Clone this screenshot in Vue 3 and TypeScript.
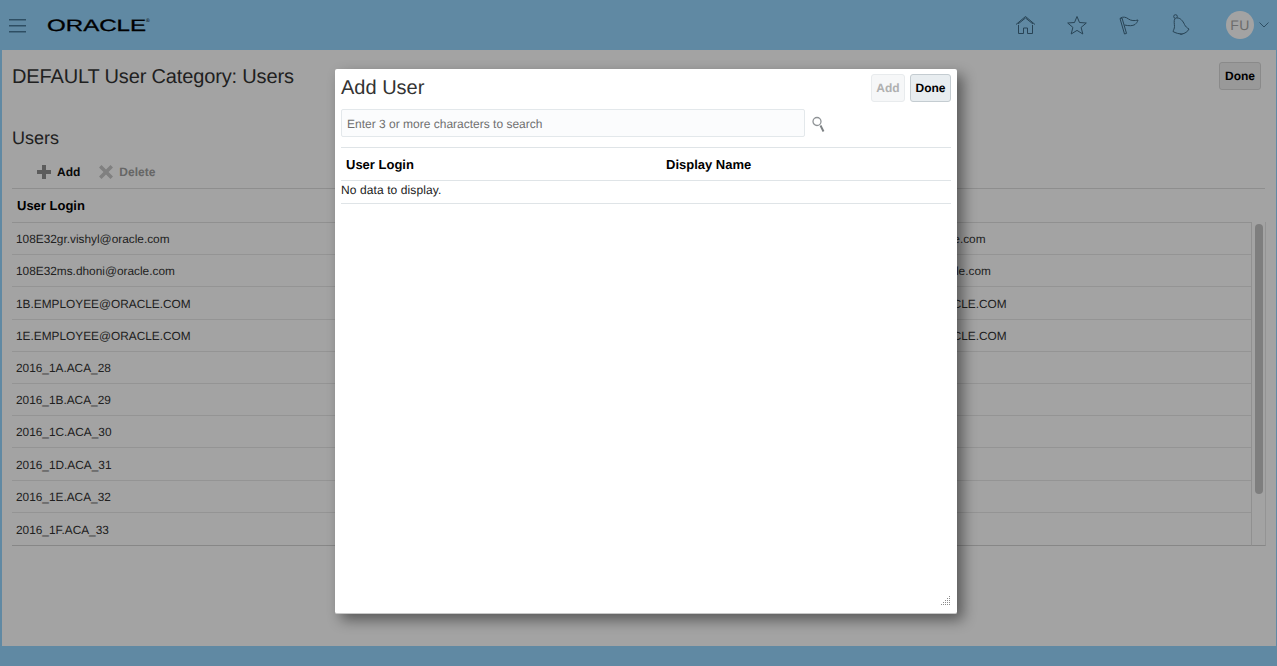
<script setup lang="ts">
interface UserRow {
  login: string
  display: string
}

const logins = [
  '108E32gr.vishyl@oracle.com',
  '108E32ms.dhoni@oracle.com',
  '1B.EMPLOYEE@ORACLE.COM',
  '1E.EMPLOYEE@ORACLE.COM',
  '2016_1A.ACA_28',
  '2016_1B.ACA_29',
  '2016_1C.ACA_30',
  '2016_1D.ACA_31',
  '2016_1E.ACA_32',
  '2016_1F.ACA_33',
]

const rows: UserRow[] = logins.map((login) => ({ login, display: login }))

// resize grip, a stepped triangle of dots
const grip: { x: number; y: number }[] = []
for (let r = 0; r < 5; r++) {
  for (let c = 4 - r; c < 5; c++) {
    grip.push({ x: c * 2, y: r * 2 })
  }
}
</script>

<template>
  <div class="page">
    <header class="topbar">
      <div class="burger"><i></i><i></i><i></i></div>
      <div class="logo"><span class="logo-text">ORACLE</span><span class="logo-reg">®</span></div>
      <nav class="nav">
        <svg class="nav-icon" width="22" height="20" viewBox="0 0 22 20">
          <path d="M1 9.500 10.500 1.500 20 9.500M3 9 10.500 3 18 9" />
          <path d="M3.500 10v8.500h5V13h4v5.500h5V10" />
        </svg>
        <svg class="nav-icon star" width="22" height="20" viewBox="0 0 22 20">
          <path d="M11 1.500l2.500 6 6.800.5-5.200 4.400 1.700 6.600-5.800-3.600-5.800 3.600 1.700-6.600L1.700 8l6.800-.5z" />
        </svg>
        <svg class="nav-icon" width="22" height="20" viewBox="0 0 22 20">
          <path d="M1 3.500 5.500 19l2-.6L3 3z" />
          <path d="M1.500 3C4 1.500 7 2 9.500 4c2.500 1.800 6 2 9.500 1-.5 2-1.500 3-3 4.500-2.500 1.500-6 1.500-10.500.500" />
        </svg>
        <svg class="nav-icon" width="22" height="22" viewBox="0 0 22 22">
          <circle cx="4.500" cy="2.500" r="1.800" />
          <path d="M4 4.500C2.500 7 3.500 10 3.500 12.500c0 2-1 3.500-1.500 5 2.500 1.500 6 2.500 9 2.500 2.500-.3 6-2.500 7-5-2-1-3.500-2.500-4.500-4.500C12 7 9 3.500 6 4" />
          <path d="M8.500 19.500c.8 1 2 1.100 3 .4" />
        </svg>
        <div class="avatar">FU</div>
        <svg class="chevron" width="10" height="6" viewBox="0 0 10 6">
          <path d="M.5.500 5 5 9.500.500" />
        </svg>
      </nav>
    </header>

    <main class="content">
      <div class="title-row">
        <h1>DEFAULT User Category: Users</h1>
        <button class="btn page-done">Done</button>
      </div>
      <h2>Users</h2>
      <div class="toolbar">
        <span class="tool">
          <svg width="14" height="14" viewBox="0 0 14 14"><path class="tool-plus" d="M5 0h4v5h5v4H9v5H5V9H0V5h5z" /></svg>
          <b>Add</b>
        </span>
        <span class="tool tool-off">
          <svg width="14" height="14" viewBox="0 0 14 14"><path class="tool-x" d="M2.500 0 7 4.500 11.500 0 14 2.500 9.500 7l4.500 4.500-2.500 2.500L7 9.500 2.500 14 0 11.500 4.500 7 0 2.500z" /></svg>
          <b>Delete</b>
        </span>
      </div>
      <div class="thead">
        <span>User Login</span>
        <span>Display Name</span>
      </div>
      <div class="scroller">
        <div class="tbody">
          <div v-for="row in rows" :key="row.login" class="trow">
            <span>{{ row.login }}</span>
            <span>{{ row.display }}</span>
          </div>
        </div>
        <div class="track"><div class="thumb"></div></div>
      </div>
    </main>

    <footer class="footer"></footer>

    <div class="mask"></div>

    <section class="dialog">
      <div class="dialog-head">
        <h3>Add User</h3>
        <div class="dialog-actions">
          <button class="btn btn-off">Add</button>
          <button class="btn btn-done">Done</button>
        </div>
      </div>
      <div class="search">
        <input class="search-input" type="text" placeholder="Enter 3 or more characters to search" />
        <svg width="14" height="20" viewBox="0 0 14 20">
          <circle cx="5" cy="8.500" r="4" fill="none" stroke="#8f9396" stroke-width="1.300" />
          <path d="M8.500 12.500 11.500 18.500" stroke="#7d8184" stroke-width="2" />
        </svg>
      </div>
      <div class="dialog-thead">
        <span>User Login</span>
        <span>Display Name</span>
      </div>
      <div class="empty">No data to display.</div>
      <svg class="grip" width="10" height="10" viewBox="0 0 10 10">
        <rect v-for="(d, i) in grip" :key="i" :x="d.x" :y="d.y" width="1" height="1" />
      </svg>
    </section>
  </div>
</template>

<style scoped>
.page {
  position: relative;
  display: flex;
  flex-direction: column;
  height: 666px;
  overflow: hidden;
  background: #96d6ff;
  font-family: "Liberation Sans", Arial, sans-serif;
  font-size: 12px;
  color: #333;
  text-rendering: geometricPrecision;
}

.topbar {
  display: flex;
  align-items: center;
  flex: 0 0 50px;
  padding-left: 9px;
}

.burger {
  display: flex;
  flex-direction: column;
  gap: 5px;
  width: 17px;
  margin-top: 1px;
}

.burger i {
  height: 1px;
  background: #487b9b;
  box-shadow: 0 1px 0 #487b9b80;
}

.logo {
  display: flex;
  align-items: flex-start;
  margin: 2px 0 0 21px;
  color: #000;
}

.logo-text {
  display: block;
  width: 70px;
  font-size: 16.5px;
  line-height: 17px;
  transform: scaleX(1.46);
  transform-origin: left center;
  -webkit-text-stroke: 0.3px #000;
}

.logo-reg {
  margin-left: 29px;
  font-size: 5px;
  line-height: 6px;
}

.nav {
  display: flex;
  align-items: center;
  margin-left: auto;
  padding-right: 8px;
}

.nav-icon {
  margin-right: 30px;
  fill: none;
  stroke: #3f6a85;
  stroke-width: 1;
}

.star {
  margin: 0 31px 0 -1px;
}

.avatar {
  display: flex;
  align-items: center;
  justify-content: center;
  width: 28px;
  height: 28px;
  margin-left: 3px;
  border-radius: 50%;
  background: #fff;
  color: #aaa;
  font-size: 14px;
  letter-spacing: 0.5px;
}

.chevron {
  margin-left: 5px;
  fill: none;
  stroke: #487b9b;
}

.content {
  flex: 1;
  margin: 0 1px 0 2px;
  padding: 12px 0 0 10px;
  background: #fff;
}

.title-row {
  display: flex;
  align-items: flex-start;
  justify-content: space-between;
  height: 30px;
  padding-right: 15px;
}

h1,
h2,
h3 {
  margin: 0;
  font-weight: 400;
}

h1 {
  margin-top: 1px;
  font-size: 20px;
  line-height: 28px;
  letter-spacing: -0.15px;
}

h2 {
  margin-top: 34px;
  font-size: 18px;
  line-height: 24px;
}

.toolbar {
  display: flex;
  align-items: center;
  gap: 19px;
  box-sizing: border-box;
  height: 39px;
  margin-right: 11px;
  padding: 6px 0 0 25px;
  border-bottom: 1px solid #dfdfdf;
}

.tool {
  display: flex;
  align-items: center;
  gap: 6px;
  color: #111;
}

.tool-off {
  color: #a0a0a0;
}

.tool-plus {
  fill: #909090;
}

.tool-x {
  fill: #c8c8c8;
}

.thead,
.trow {
  display: grid;
  grid-template-columns: 816px 1fr;
  padding-left: 4px;
}

.thead {
  align-items: center;
  box-sizing: border-box;
  height: 33px;
  width: 1240px;
  padding-left: 5px;
  font-size: 13px;
  font-weight: 700;
  color: #000;
}

.scroller {
  display: flex;
  height: 324px;
  margin-right: 10px;
}

.tbody {
  display: grid;
  flex: 0 0 1240px;
  box-sizing: border-box;
  grid-auto-rows: 1fr;
  border: 1px solid #e2e2e2;
  border-width: 1px 1px 1px 0;
  border-bottom-color: #d4d4d4;
}

.trow {
  align-items: center;
  padding-top: 1.4px;
  border-bottom: 1px solid #e8e8e8;
  font-size: 11.85px;
}

.trow:last-child {
  border-bottom: 0;
}

.track {
  flex: 0 0 14px;
  box-sizing: border-box;
  padding: 2px 2px 0 3px;
  border-right: 1px solid #e8e8e8;
  border-bottom: 1px solid #d4d4d4;
  overflow: hidden;
}

.thumb {
  width: 8px;
  height: 270px;
  border-radius: 4px;
  background: #c6c6c6;
}

.footer {
  flex: 0 0 20px;
}

.mask {
  position: absolute;
  inset: 0;
  background: rgba(0, 0, 0, 0.36);
}

.btn {
  width: 41px;
  height: 28px;
  padding: 0;
  border: 1px solid #c4ccd1;
  border-radius: 3px;
  background: #e8edf0;
  font-family: inherit;
  font-size: 12px;
  font-weight: 700;
  color: #000;
  text-rendering: geometricPrecision;
}

.btn-off {
  width: 34px;
  border-color: #e8ebed;
  background: #f6f7f8;
  color: #b0b0b0;
}

.page-done {
  width: 42px;
  border-color: #d8d8d8;
  background: #f0f0f0;
}

.dialog {
  position: absolute;
  top: 69px;
  left: 335px;
  width: 622px;
  height: 545px;
  box-sizing: border-box;
  padding: 5px 6px 0;
  border-bottom: 1px solid #c8c8c8;
  border-radius: 2px;
  background: #fff;
  box-shadow: 6px 6px 14px rgba(0, 0, 0, 0.45);
}

.dialog-head {
  display: flex;
  align-items: center;
  justify-content: space-between;
  height: 28px;
}

h3 {
  font-size: 20px;
  line-height: 28px;
}

.dialog-actions {
  display: flex;
  gap: 5px;
}

.search {
  display: flex;
  align-items: center;
  gap: 7px;
  height: 28px;
  margin-top: 7px;
}

.search-input {
  box-sizing: border-box;
  width: 464px;
  height: 28px;
  padding: 1px 5px 0;
  border: 1px solid #e3e8eb;
  border-radius: 2px;
  outline: 0;
  background: #fbfcfd;
  font-family: inherit;
  font-size: 12px;
  text-rendering: geometricPrecision;
}

.search-input::placeholder {
  color: #707070;
  opacity: 1;
}

.dialog-thead {
  display: grid;
  grid-template-columns: 320px 1fr;
  align-items: center;
  height: 32px;
  margin-top: 10px;
  padding-left: 5px;
  border-top: 1px solid #dfe4e7;
  border-bottom: 1px solid #dfe4e7;
  font-size: 13px;
  font-weight: 700;
  color: #000;
}

.empty {
  height: 22px;
  border-bottom: 1px solid #dfe4e7;
  line-height: 18px;
  letter-spacing: 0.1px;
  color: #222;
}

.grip {
  position: absolute;
  right: 6px;
  bottom: 7px;
  fill: #8c8c8c;
}
</style>

<style>
html,
body {
  margin: 0;
  background: #96d6ff;
}
</style>
